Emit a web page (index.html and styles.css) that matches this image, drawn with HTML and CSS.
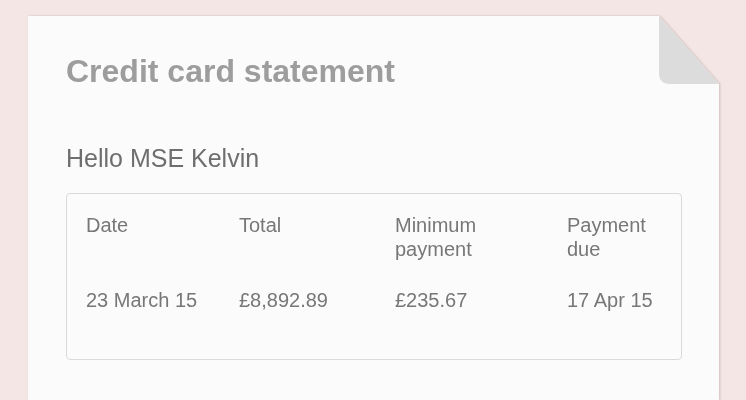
FILE: index.html
```html
<!DOCTYPE html>
<html>
<head>
<meta charset="utf-8">
<link rel="stylesheet" href="styles.css">
</head>
<body>
<div class="sheet-wrap">
  <div class="sheet">
    <h1 class="title">Credit card statement</h1>
    <p class="hello">Hello MSE Kelvin</p>
    <div class="summary">
      <div class="cell">Date</div>
      <div class="cell">Total</div>
      <div class="cell">Minimum<br>payment</div>
      <div class="cell">Payment<br>due</div>
      <div class="cell val">23 March 15</div>
      <div class="cell val">£8,892.89</div>
      <div class="cell val">£235.67</div>
      <div class="cell val">17 Apr 15</div>
    </div>
  </div>
  <svg class="fold" width="60" height="68" viewBox="0 0 60 68"><path d="M0 0 L60 68 L11 68 Q0 68 0 57 Z" fill="#dcdcdc"/></svg>
</div>
</body>
</html>
```
FILE: styles.css
```css
html, body {
  margin: 0;
  padding: 0;
  background: #f3e6e4;
  height: 400px;
  overflow: hidden;
}
body {
  padding: 16px 0 0 28px;
  box-sizing: border-box;
  font-family: "Liberation Sans", Arial, sans-serif;
}
.sheet-wrap {
  position: relative;
  width: 691px;
  filter: drop-shadow(1px 0 1px rgba(80, 40, 40, 0.22));
}
.sheet {
  background: #fbfbfb;
  height: 384px;
  padding: 36px 0 0 38px;
  box-sizing: border-box;
  clip-path: polygon(0 0, 631px 0, 691px 68px, 691px 100%, 0 100%);
}
.fold {
  position: absolute;
  left: 631px;
  top: 0;
  display: block;
}
.title {
  margin: 0;
  font-size: 32px;
  line-height: 38px;
  font-weight: bold;
  color: #9d9d9d;
}
.hello {
  margin: 53px 0 0;
  font-size: 25px;
  line-height: 30px;
  color: #6e6e6e;
}
.summary {
  margin-top: 20px;
  width: 616px;
  box-sizing: border-box;
  height: 167px;
  border: 1px solid #dadada;
  border-radius: 4px;
  padding: 19px 0 0 19px;
  display: grid;
  grid-template-columns: 153px 156px 172px 1fr;
  grid-template-rows: 48px 24px;
  row-gap: 27px;
  align-content: start;
  font-size: 20px;
  line-height: 24px;
  color: #777;
}
```
